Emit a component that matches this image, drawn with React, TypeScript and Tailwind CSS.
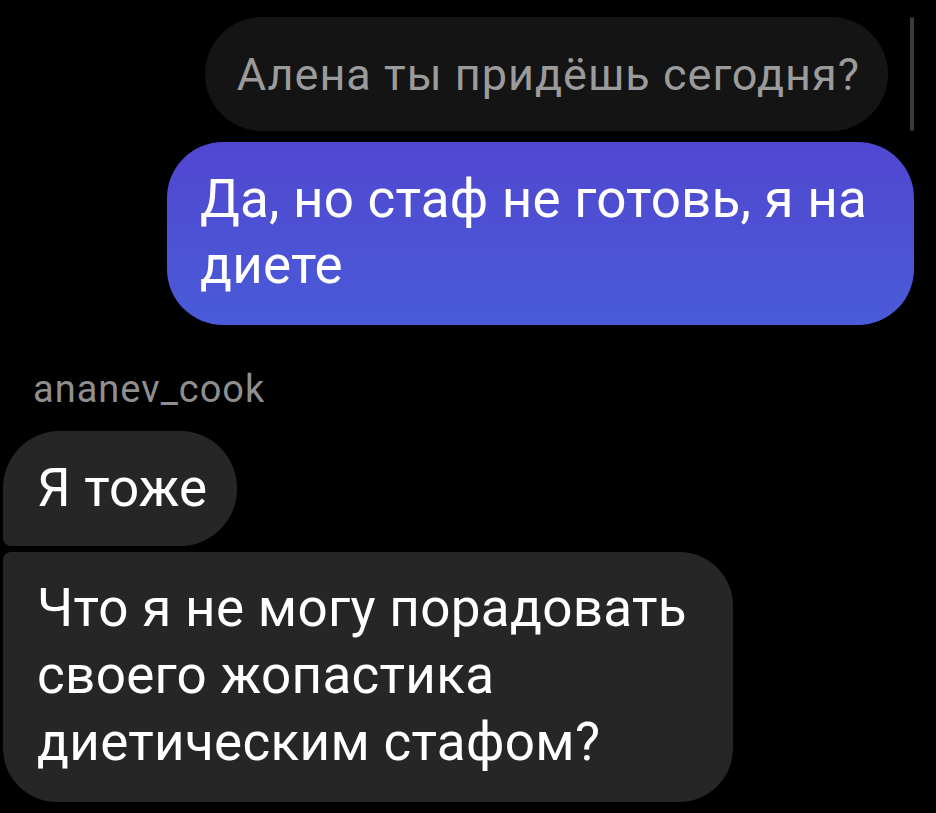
import React from 'react';

export default function App() {
  return (
    <div className="w-[936px] h-[813px] bg-black overflow-hidden flex flex-col font-['Roboto',sans-serif]">
      {/* quoted reply */}
      <div className="flex justify-end items-stretch mt-[17px]">
        <div className="h-[114px] rounded-full bg-[#141414] flex items-center pl-[32px] pr-[28px]">
          <span className="text-[45px] leading-none text-[#9b9b9b] tracking-[1px]">Алена ты придёшь сегодня?</span>
        </div>
        <div className="w-[4px] rounded-full bg-[#3a3a3a] ml-[22px] mr-[22px]" />
      </div>

      {/* my message */}
      <div className="self-end mr-[22px] mt-[11px] w-[747px] rounded-[56px] bg-gradient-to-b from-[#5047d0] to-[#495bd8] pl-[33px] pr-[30px] pt-[24px] pb-[27px]">
        <p className="text-[53px] leading-[66px] text-white tracking-[0.2px]">Да, но стаф не готовь, я на диете</p>
      </div>

      {/* their messages */}
      <div className="pl-[33px] mt-[44px] text-[38px] leading-[40px] text-[#8f8f8f] tracking-[1px]">ananev_cook</div>

      <div className="self-start ml-[3px] mt-[22px] h-[115px] flex items-center rounded-[57px] rounded-bl-[8px] bg-[#262626] pl-[34px] pr-[30px]">
        <span className="text-[53px] leading-none text-white tracking-[0.2px]">Я тоже</span>
      </div>

      <div className="self-start ml-[3px] mt-[6px] w-[730px] rounded-[54px] rounded-tl-[8px] bg-[#262626] pl-[34px] pr-[20px] pt-[23px] pb-[26px]">
        <p className="text-[53px] leading-[67px] text-white tracking-[0.3px]">Что я не могу порадовать своего жопастика диетическим стафом?</p>
      </div>
    </div>
  );
}
